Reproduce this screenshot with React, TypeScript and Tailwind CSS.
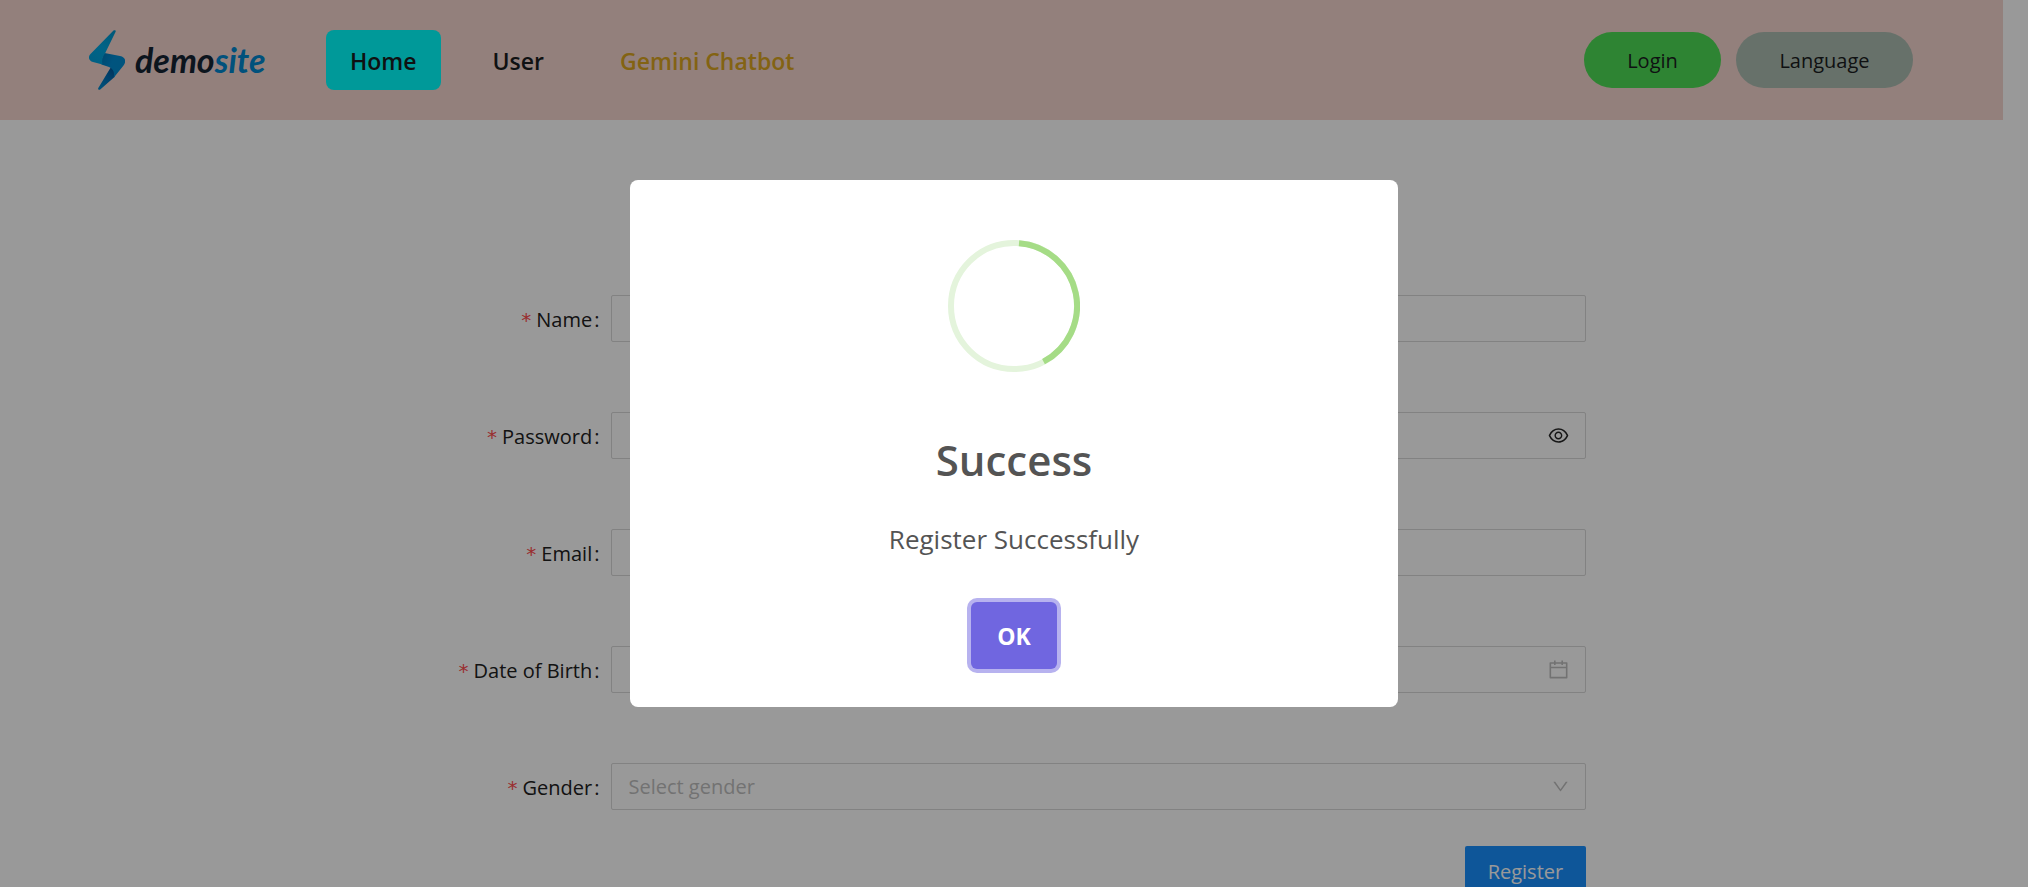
import { AiOutlineCalendar, AiOutlineDown, AiOutlineEye } from "react-icons/ai";

function Bolt() {
  return (
    <svg viewBox="0 0 36 60" className="h-[60px] w-9" aria-hidden="true">
      <defs>
        <linearGradient id="boltTop" x1="0.8" y1="0" x2="0.2" y2="1">
          <stop offset="0" stopColor="#0095cc" />
          <stop offset="0.5" stopColor="#00a6e0" />
          <stop offset="1" stopColor="#00a0dc" />
        </linearGradient>
        <linearGradient id="boltMid" x1="0" y1="0" x2="1" y2="0.6">
          <stop offset="0" stopColor="#0077b8" />
          <stop offset="0.5" stopColor="#008cd4" />
          <stop offset="1" stopColor="#008cd0" />
        </linearGradient>
        <linearGradient id="boltTail" x1="0.8" y1="0" x2="0.2" y2="1">
          <stop offset="0" stopColor="#005498" />
          <stop offset="0.5" stopColor="#0071b8" />
          <stop offset="1" stopColor="#0088cc" />
        </linearGradient>
      </defs>
      <path d="M20 36L26 39L25.500 47L11.500 59.300C10.300 60.400 8.600 59.600 9.300 58L22 37Z" fill="url(#boltTail)" />
      <path d="M15.500 23L31 26C36.500 27 37.500 31.500 34.500 35.500L24.500 48C26 43 24.500 38.800 20 37L12.500 34.500C12.500 30 13 26 15.500 23Z" fill="url(#boltMid)" />
      <path d="M24.500 0.400C26 -0.300 27.200 0.400 26.600 1.800L16 23.500C13.500 26.500 12.500 30.500 13.500 34.500L4 32C0 31 -1.500 27 1.500 24Z" fill="url(#boltTop)" />
    </svg>
  );
}

function Header() {
  return (
    <header className="mr-[25px] flex h-[120px] items-center justify-between bg-[#f5d5cf] pr-[90px] pl-[89px]">
      <div className="flex items-center">
        <a href="#home" className="mr-[60px] flex items-center gap-[10px]">
          <Bolt />
          <span className="w-[131px] font-['Lato',sans-serif] text-[34px] leading-9 font-bold text-[#142433] italic">
            demo<span className="text-[#0087cf]">site</span>
          </span>
        </a>
        <nav className="flex items-center gap-7 text-[23px] leading-8 font-semibold">
          <a href="#home" className="flex h-[60px] items-center rounded-lg bg-[#00ffff] px-6 pt-0.5 text-[#1a1d20]">Home</a>
          <a href="#user" className="flex h-[60px] items-center px-6 pt-0.5 text-[#1a1d20]">User</a>
          <a href="#chatbot" className="flex h-[60px] items-center px-6 pt-0.5 text-[#daa520]">Gemini Chatbot</a>
        </nav>
      </div>
      <div className="flex gap-[15px] text-xl font-medium text-[#1a1d20]">
        <button type="button" className="h-14 w-[137px] rounded-full bg-[#4edc55] pt-0.5">Login</button>
        <button type="button" className="h-14 w-[177px] rounded-full bg-[#acbcb1] pt-0.5">Language</button>
      </div>
    </header>
  );
}

const fields = [
  { id: "name", label: "Name", type: "text" },
  { id: "password", label: "Password", type: "password" },
  { id: "email", label: "Email", type: "email" },
  { id: "birth", label: "Date of Birth", type: "text" },
  { id: "gender", label: "Gender", type: "select" },
];

function RegisterForm() {
  return (
    <form className="mr-[21.8%] pt-[175px]">
      <div className="flex flex-col gap-[70px]">
        {fields.map((f) => (
          <div key={f.id} className="flex h-[47px] items-center gap-3">
            <label htmlFor={f.id} className="flex w-[37.8%] items-center justify-end pt-0.5 text-xl text-[#212121]">
              <span className="mr-1 font-['DejaVu_Sans_Mono',monospace] text-[#ff4d4f]">*</span>
              {f.label}
              <span className="ml-0.5">:</span>
            </label>
            <div className="relative h-full flex-1">
              {f.type === "select" ? (
                <select id={f.id} defaultValue="" className="h-full w-full appearance-none rounded-xs border border-[#d9d9d9] bg-white px-4 text-xl text-[#bfbfbf]">
                  <option value="">Select gender</option>
                </select>
              ) : (
                <input id={f.id} type={f.type} className="h-full w-full rounded-xs border border-[#d9d9d9] bg-white px-4 text-xl" />
              )}
              {f.id === "password" && (
                <button type="button" aria-label="Show password" className="absolute inset-y-0 right-4 text-[#262626]">
                  <AiOutlineEye size={23} />
                </button>
              )}
              {f.id === "birth" && <AiOutlineCalendar size={23} className="absolute inset-y-0 right-4 my-auto text-[#bfbfbf]" />}
              {f.id === "gender" && <AiOutlineDown size={19} className="absolute inset-y-0 right-4 my-auto text-[#bfbfbf]" />}
            </div>
          </div>
        ))}
      </div>
      <div className="mt-9 flex justify-end">
        <button type="submit" className="h-[51px] w-[121px] rounded-xs bg-[#1890ff] text-xl text-white">Register</button>
      </div>
    </form>
  );
}

function SuccessDialog() {
  return (
    <div className="fixed inset-0 flex items-center justify-center bg-black/40">
      <div role="dialog" aria-modal="true" aria-labelledby="dialog-title" className="flex w-3xl flex-col items-center rounded-lg bg-white pt-15 pb-[38px] text-[#545454]">
        <svg viewBox="0 0 132 132" className="size-[132px]" fill="none" strokeWidth="6" aria-hidden="true">
          <circle cx="66" cy="66" r="63" stroke="#e4f4dc" />
          <path d="M71 3.200A63 63 0 0 1 95.500 121.700" stroke="#a5dc86" />
        </svg>
        <h2 id="dialog-title" className="mt-[60px] text-[42px] leading-[56px] font-semibold">Success</h2>
        <p className="mt-[33px] text-[26px] leading-9">Register Successfully</p>
        <button type="button" className="mt-[45px] h-[67px] w-[86px] rounded-md bg-[#7066e0] pt-0.5 text-[23px] font-bold text-white ring-4 ring-[#b7b2ef]">OK</button>
      </div>
    </div>
  );
}

export default function App() {
  return (
    <div className="h-screen overflow-hidden bg-white font-['Open_Sans',sans-serif]">
      <Header />
      <main>
        <RegisterForm />
      </main>
      <SuccessDialog />
    </div>
  );
}
